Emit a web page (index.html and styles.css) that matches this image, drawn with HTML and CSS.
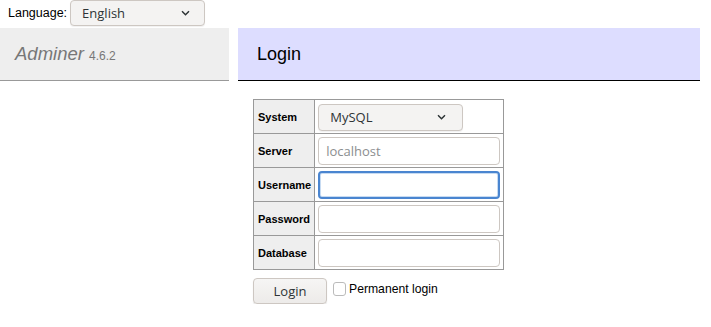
FILE: index.html
```html
<!DOCTYPE html>
<html lang="en">
<head>
  <meta charset="UTF-8" />
  <title>Login - Adminer</title>
  <link rel="stylesheet" href="styles.css">
</head>
<body>
  <form class="lang">
    <label for="lang">Language:</label>
    <select id="lang" class="control select lang-select">
      <option>English</option>
    </select>
  </form>

  <div class="layout">
    <div class="menu">
      <h1><span class="brand">Adminer</span> <span class="version">4.6.2</span></h1>
    </div>

    <div class="content">
      <h2>Login</h2>

      <form class="login">
        <table>
          <tr>
            <th>System</th>
            <td>
              <select class="control select driver">
                <option>MySQL</option>
              </select>
            </td>
          </tr>
          <tr>
            <th>Server</th>
            <td><input class="control field" type="text" placeholder="localhost" /></td>
          </tr>
          <tr>
            <th>Username</th>
            <td><input class="control field focused" type="text" /></td>
          </tr>
          <tr>
            <th>Password</th>
            <td><input class="control field" type="password" /></td>
          </tr>
          <tr>
            <th>Database</th>
            <td><input class="control field" type="text" /></td>
          </tr>
        </table>

        <div class="actions">
          <button type="button" class="control button">Login</button>
          <label class="permanent"><input type="checkbox" class="check" /> Permanent login</label>
        </div>
      </form>
    </div>
  </div>
</body>
</html>
```

FILE: styles.css
```css
    body {
      background: #fff;
      color: #000;
      font-family: "Liberation Sans", Arial, sans-serif;
      font-size: 12.5px;
      margin: 0;
    }

    .lang {
      display: flex;
      align-items: flex-start;
      gap: 3px;
      height: 28px;
      padding: 0 0 0 8px;
    }

    .lang label {
      line-height: 26px;
    }

    .control {
      font-family: "Open Sans", "Liberation Sans", sans-serif;
      font-size: 13px;
      color: #2e3436;
      box-sizing: border-box;
      border: 1px solid #cdc7c2;
      border-radius: 4px;
      outline: none;
      margin: 0;
    }

    .select {
      -webkit-appearance: none;
      appearance: none;
      background-color: #f4f3f2;
      background-image: url("data:image/svg+xml,%3Csvg xmlns='http://www.w3.org/2000/svg' width='9' height='6' viewBox='0 0 9 6'%3E%3Cpath d='M1 1.2l3.5 3.5 3.5-3.5' fill='none' stroke='%232e3436' stroke-width='1.5'/%3E%3C/svg%3E");
      background-repeat: no-repeat;
      box-shadow: 0 1px 1px rgba(0, 0, 0, 0.06);
    }

    .lang-select {
      width: 135px;
      height: 26px;
      padding: 0 0 0 11px;
      background-position: right 14px center;
    }

    .layout {
      display: flex;
      align-items: flex-start;
    }

    .menu {
      width: 229px;
      flex: none;
    }

    h1 {
      margin: 0;
      height: 52px;
      line-height: 52px;
      padding: 0 15px;
      background: #eee;
      border-bottom: 1px solid #999;
      color: #777;
      font-weight: normal;
      font-size: 18.5px;
    }

    .brand {
      font-style: italic;
    }

    .version {
      font-size: 12px;
    }

    .content {
      margin-left: 9px;
      width: 462px;
    }

    h2 {
      margin: 0;
      height: 52px;
      line-height: 52px;
      padding: 0 19px;
      background: #ddf;
      border-bottom: 1px solid #000;
      font-weight: normal;
      font-size: 18px;
    }

    .login {
      margin: 18px 0 0 15px;
    }

    table {
      border-spacing: 0;
      border-top: 1px solid #999;
      border-left: 1px solid #999;
    }

    th, td {
      border-right: 1px solid #999;
      border-bottom: 1px solid #999;
      padding: 3px 3px 2px 3px;
      height: 28px;
    }

    th {
      background: #eee;
      text-align: left;
      font-size: 11px;
      padding-left: 4px;
    }

    .driver {
      width: 145px;
      height: 27px;
      padding: 0 0 0 11px;
      background-position: right 16px center;
    }

    .field {
      width: 182px;
      height: 28px;
      padding: 0 7px;
      background: #fff;
      display: block;
    }

    .field::placeholder {
      color: #8b8e8f;
    }

    .focused {
      border: 2px solid #4a85d0;
      box-shadow: inset 0 0 0 1px #c7dbf2;
    }

    .actions {
      display: flex;
      align-items: center;
      margin-top: 8px;
    }

    .button {
      width: 74px;
      height: 26px;
      background: linear-gradient(#f6f5f4, #edebe9);
      box-shadow: 0 1px 1px rgba(0, 0, 0, 0.12);
      padding: 0;
    }

    .permanent {
      display: flex;
      align-items: center;
      margin-left: 6px;
      gap: 3px;
      font-size: 12.2px;
      position: relative;
      top: -2px;
    }

    .check {
      -webkit-appearance: none;
      appearance: none;
      width: 13px;
      height: 14px;
      margin: 0;
      border: 1px solid #bbb;
      border-radius: 3px;
      background: #fff;
    }
```
